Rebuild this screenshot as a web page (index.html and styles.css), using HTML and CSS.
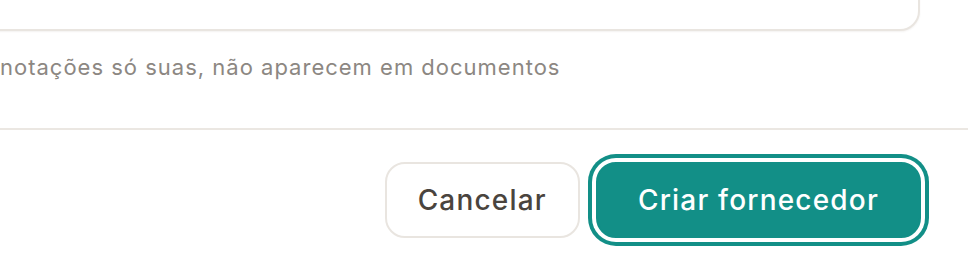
FILE: index.html
```html
<!DOCTYPE html>
<html lang="pt">
<head>
<meta charset="utf-8">
<title>Criar fornecedor</title>
<link rel="stylesheet" href="styles.css">
</head>
<body>
<div class="modal">
  <div class="body">
    <div class="textarea"></div>
    <p class="hint">notações só suas, não aparecem em documentos</p>
  </div>
  <div class="footer">
    <button class="btn btn-secondary" type="button">Cancelar</button>
    <button class="btn btn-primary" type="button">Criar fornecedor</button>
  </div>
</div>
</body>
</html>
```
FILE: styles.css
```css
* { box-sizing: border-box; }
html, body {
  margin: 0;
  padding: 0;
  background: #ffffff;
  overflow: hidden;
}
body {
  font-family: Inter, "Noto Sans", sans-serif;
  width: 968px;
  height: 270px;
}
.modal {
  display: flex;
  flex-direction: column;
}
.body {
  padding: 0 48px 0 0;
  height: 128px;
}
.textarea {
  margin-top: -40px;
  margin-left: -30px;
  height: 71px;
  border: 2px solid #e9e5e0;
  border-radius: 20px;
  background: #fff;
  box-shadow: 0 1px 2px rgba(60, 40, 20, 0.06);
}
.hint {
  margin: 22px 0 0 0;
  font-size: 22px;
  line-height: 28px;
  color: #8c8782;
  letter-spacing: 1px;
}
.footer {
  border-top: 2px solid #ebe7e2;
  display: flex;
  justify-content: flex-end;
  align-items: center;
  gap: 16px;
  padding: 32px 47px 32px 0;
}
.btn {
  font-family: Inter, "Noto Sans", sans-serif;
  height: 76px;
  border-radius: 20px;
  font-size: 28px;
  font-weight: 500;
  letter-spacing: 1.2px;
  cursor: pointer;
}
.btn-secondary {
  background: #fff;
  border: 2px solid #e9e5e0;
  color: #4a443e;
  padding: 0 31px;
}
.btn-primary {
  background: #128f87;
  border: 2px solid #128f87;
  color: #fff;
  padding: 0 40px;
  box-shadow: 0 0 0 4px #fff, 0 0 0 8px #128f87;
}
```
